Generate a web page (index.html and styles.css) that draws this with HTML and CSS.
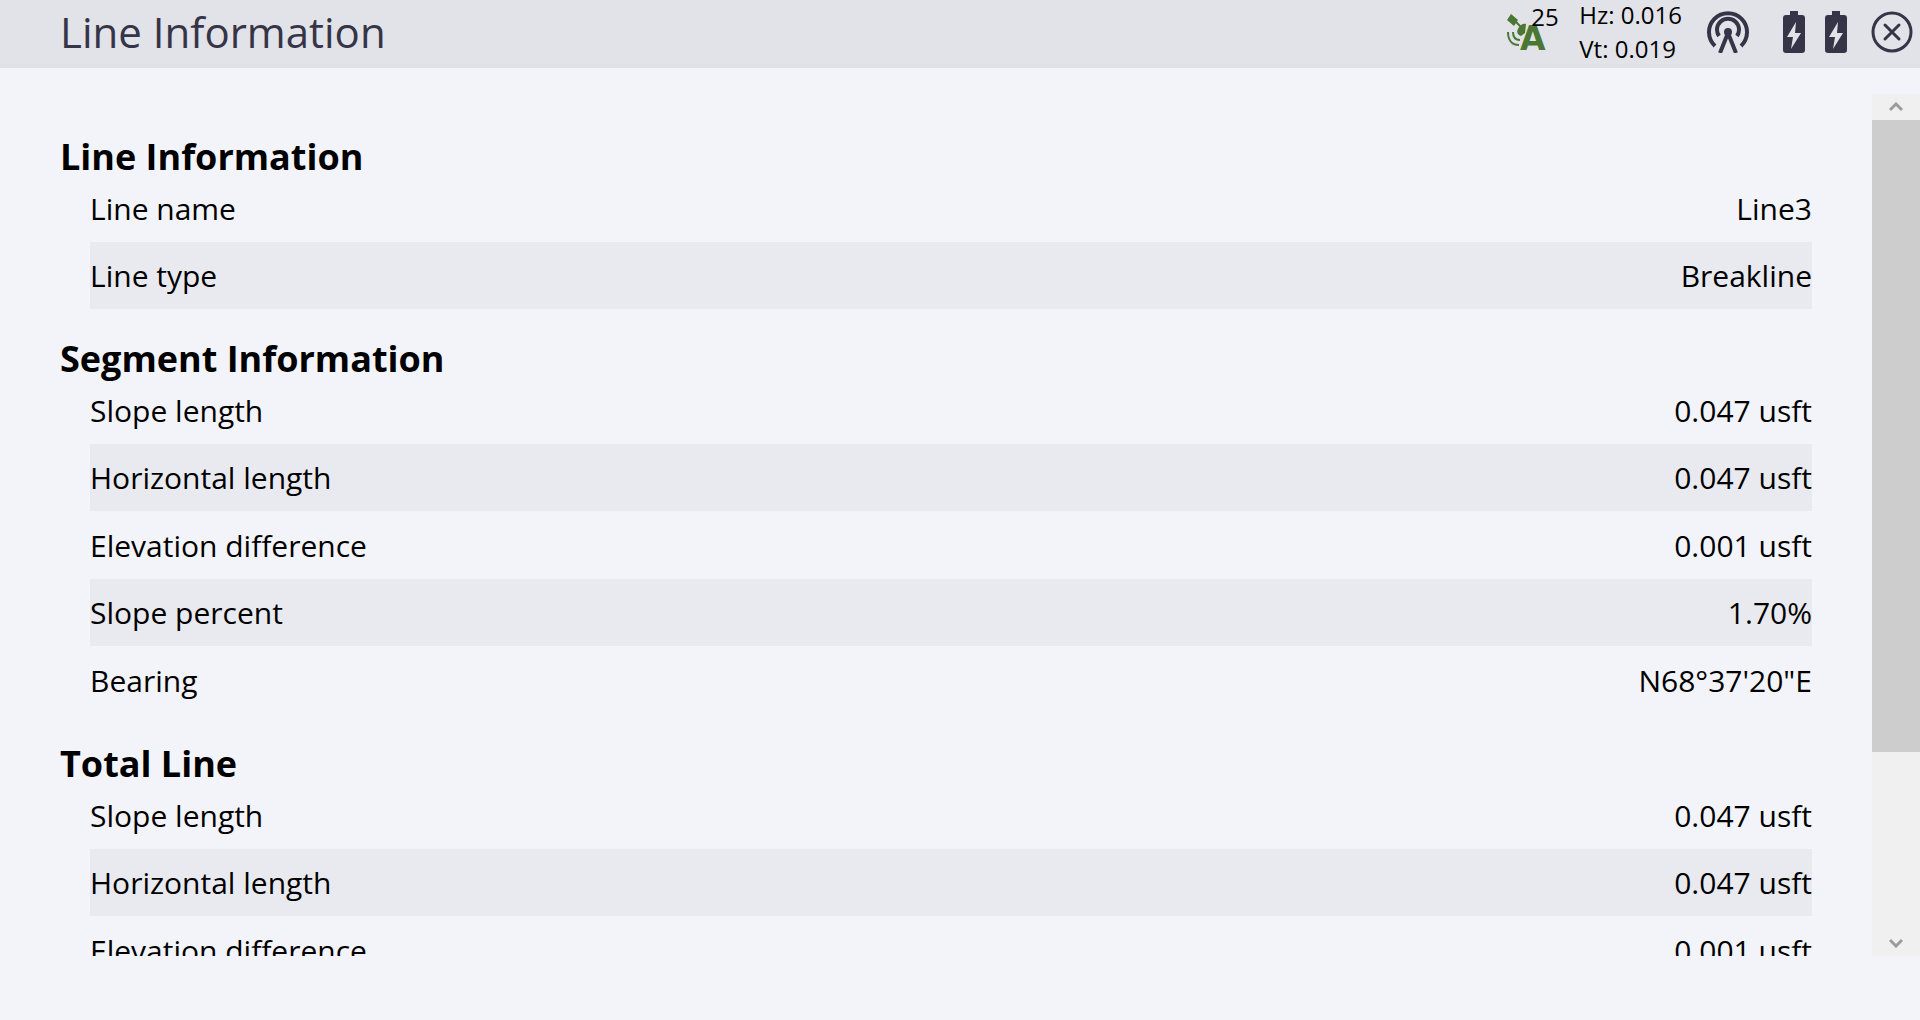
FILE: index.html
```html
<!DOCTYPE html>
<html lang="en">
<head>
  <meta charset="UTF-8" />
  <meta name="viewport" content="width=device-width, initial-scale=1.0"/>
  <title>Line Information</title>
  <link rel="stylesheet" href="styles.css">
</head>
<body>
  <header class="topbar">
    <h1>Line Information</h1>
    <div class="status">
      <div class="satellites">
        <svg width="40" height="40" viewBox="0 0 40 40" aria-hidden="true">
          <path class="green" d="M4 2l7 6-4 6-7-6zM11 17c2-4 5-6 8-5l-1 9-4 3c-3-1-5-4-3-7z"/>
          <path class="wave" d="M6 20c0 5 2 8 7 8M1 20c0 8 4 13 11 13M9 10l5 5"/>
          <text class="mode" x="13" y="38">A</text>
        </svg>
        <span class="count">25</span>
      </div>
      <div class="accuracy">
        <div>Hz: 0.016</div>
        <div>Vt: 0.019</div>
      </div>
      <svg class="radio" width="42" height="42" viewBox="0 0 42 42" aria-hidden="true">
        <path d="M8 35a19 19 0 1 1 26 0M12 25a11 11 0 1 1 18 0M13 42l8-20 8 20"/>
        <circle cx="21" cy="21" r="4"/>
      </svg>
      <div class="batteries">
        <svg width="22" height="42" viewBox="0 0 22 42" aria-hidden="true">
          <path class="dark" d="M7 0h8v4h4q3 0 3 3v32q0 3-3 3H3q-3 0-3-3V7q0-3 3-3h4z"/>
          <path class="bolt" d="M13 11L4 26h6L8 38l10-16h-6z"/>
        </svg>
        <svg width="22" height="42" viewBox="0 0 22 42" aria-hidden="true">
          <path class="dark" d="M7 0h8v4h4q3 0 3 3v32q0 3-3 3H3q-3 0-3-3V7q0-3 3-3h4z"/>
          <path class="bolt" d="M13 11L4 26h6L8 38l10-16h-6z"/>
        </svg>
      </div>
      <button class="close" type="button" aria-label="Close">
        <svg width="42" height="42" viewBox="0 0 42 42" aria-hidden="true">
          <circle cx="21" cy="21" r="19"/>
          <path d="M14 14l14 14M28 14L14 28"/>
        </svg>
      </button>
    </div>
  </header>

  <main class="panel">
    <div class="content">
      <section>
        <h2>Line Information</h2>
        <table>
          <tr><th scope="row">Line name</th><td>Line3</td></tr>
          <tr><th scope="row">Line type</th><td>Breakline</td></tr>
        </table>
      </section>

      <section>
        <h2>Segment Information</h2>
        <table>
          <tr><th scope="row">Slope length</th><td>0.047 usft</td></tr>
          <tr><th scope="row">Horizontal length</th><td>0.047 usft</td></tr>
          <tr><th scope="row">Elevation difference</th><td>0.001 usft</td></tr>
          <tr><th scope="row">Slope percent</th><td>1.70%</td></tr>
          <tr><th scope="row">Bearing</th><td>N68°37'20"E</td></tr>
        </table>
      </section>

      <section>
        <h2>Total Line</h2>
        <table>
          <tr><th scope="row">Slope length</th><td>0.047 usft</td></tr>
          <tr><th scope="row">Horizontal length</th><td>0.047 usft</td></tr>
          <tr><th scope="row">Elevation difference</th><td>0.001 usft</td></tr>
        </table>
      </section>
    </div>

    <div class="scrollbar">
      <button type="button" aria-label="Scroll up">
        <svg width="14" height="10" viewBox="0 0 14 10" aria-hidden="true"><path d="M1 8l6-6 6 6"/></svg>
      </button>
      <div class="track"><div class="thumb"></div></div>
      <button type="button" aria-label="Scroll down">
        <svg width="14" height="10" viewBox="0 0 14 10" aria-hidden="true"><path d="M1 2l6 6 6-6"/></svg>
      </button>
    </div>
  </main>
</body>
</html>
```

FILE: styles.css
```css
* {
  box-sizing: border-box;
}

body {
  font-family: 'Open Sans', sans-serif;
  background: #f3f4f9;
  color: #000;
  margin: 0;
  height: 100vh;
  display: flex;
  flex-direction: column;
}

svg {
  display: block;
}

button {
  border: none;
  padding: 0;
  background: none;
  cursor: pointer;
}

/* top bar */
.topbar {
  display: flex;
  align-items: center;
  justify-content: space-between;
  flex: none;
  height: 68px;
  padding: 0 7px 0 60px;
  background: #e2e3e8;
  border-bottom: 4px solid #e0e1e5;
}

h1 {
  margin: 0;
  font-size: 42px;
  line-height: 64px;
  font-weight: 400;
  color: #363447;
}

.status {
  display: flex;
  align-items: center;
}

.satellites {
  position: relative;
  margin-right: 32px;
}

.count {
  position: absolute;
  left: 24px;
  top: -10px;
  font-size: 24px;
  line-height: 30px;
}

.green,
.mode {
  fill: #4b7734;
}

.wave {
  fill: none;
  stroke: #4b7734;
  stroke-width: 2;
}

.mode {
  font: bold 33px 'DejaVu Sans', sans-serif;
}

.accuracy {
  font-size: 24px;
  line-height: 34px;
  margin-right: 25px;
}

.radio {
  margin-right: 34px;
  fill: #363447;
}

.radio path {
  fill: none;
  stroke: #363447;
  stroke-width: 4;
}

.batteries {
  display: flex;
  gap: 20px;
  margin-right: 24px;
}

.dark {
  fill: #363447;
}

.bolt {
  fill: #e2e3e8;
}

.close svg {
  fill: none;
  stroke: #363447;
  stroke-width: 3;
  stroke-linecap: round;
}

/* scrolling panel */
.panel {
  display: flex;
  flex: 1;
  min-height: 0;
  margin: 26px 0 64px;
}

.content {
  flex: 1;
  overflow-y: auto;
  scrollbar-width: none;
  padding: 13px 60px;
}

h2 {
  margin: 0;
  height: 67px;
  padding-top: 32px;
  font-size: 36px;
  line-height: 36px;
}

section table {
  width: calc(100% - 30px);
  margin-left: 30px;
  border-collapse: collapse;
  font-size: 30px;
}

tr {
  height: 68px;
}

tr:nth-child(even) {
  height: 67px;
  background: #e9eaef;
}

th,
td {
  padding: 0;
  font-weight: 400;
  text-align: left;
}

td {
  text-align: right;
}

.scrollbar {
  display: flex;
  flex-direction: column;
  width: 48px;
  background: #f0f0f0;
}

.scrollbar button {
  display: flex;
  align-items: center;
  justify-content: center;
  height: 26px;
}

.scrollbar path {
  fill: none;
  stroke: #9c9c9c;
  stroke-width: 3;
}

.track {
  flex: 1;
}

.thumb {
  height: 78%;
  background: #cdcdcd;
}
```
